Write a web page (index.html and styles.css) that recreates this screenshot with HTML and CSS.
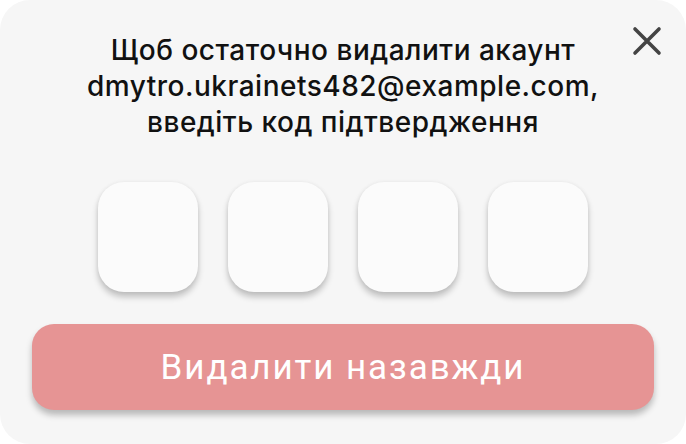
FILE: index.html
```html
<!DOCTYPE html>
<html lang="uk">
<head>
<meta charset="utf-8">
<link rel="stylesheet" href="styles.css">
</head>
<body>
<div class="card">
  <button class="close" aria-label="Закрити">
    <svg width="30" height="30" viewBox="0 0 30 30"><path d="M3 3L27 27M27 3L3 27" stroke="#444" stroke-width="3.6" stroke-linecap="round"/></svg>
  </button>
  <p class="msg">Щоб остаточно видалити акаунт<br>dmytro.ukrainets482@example.com,<br>введіть код підтвердження</p>
  <div class="codes">
    <div class="box"></div>
    <div class="box"></div>
    <div class="box"></div>
    <div class="box"></div>
  </div>
  <button class="del">Видалити назавжди</button>
</div>
</body>
</html>
```
FILE: styles.css
```css
html, body { margin: 0; padding: 0; background: #fff; }
.card {
  position: relative;
  width: 686px;
  height: 444px;
  box-sizing: border-box;
  background: #f6f6f6;
  border-radius: 30px;
  display: flex;
  flex-direction: column;
  align-items: center;
  padding-top: 32px;
}
.close {
  position: absolute;
  top: 26px;
  right: 24px;
  background: none;
  border: 0;
  padding: 0;
  width: 30px;
  height: 30px;
}
.msg {
  margin: 0;
  font-family: Inter, "Noto Sans", sans-serif;
  font-size: 28px;
  font-weight: 500;
  line-height: 36px;
  color: #111;
  text-align: center;
  letter-spacing: 0.5px;
}
.codes {
  display: flex;
  gap: 30px;
  margin-top: 42px;
}
.box {
  width: 100px;
  height: 110px;
  background: #fbfbfb;
  border-radius: 26px;
  box-shadow: 0 5px 6px rgba(0,0,0,0.22), 0 0 4px rgba(0,0,0,0.06);
}
.del {
  margin-top: 32px;
  width: 622px;
  height: 86px;
  border: 0;
  border-radius: 22px;
  background: #e69494;
  color: #fff;
  font-family: Roboto, sans-serif;
  font-size: 35px;
  font-weight: 400;
  letter-spacing: 1.9px;
  box-shadow: 0 5px 6px rgba(0,0,0,0.25);
}
```
